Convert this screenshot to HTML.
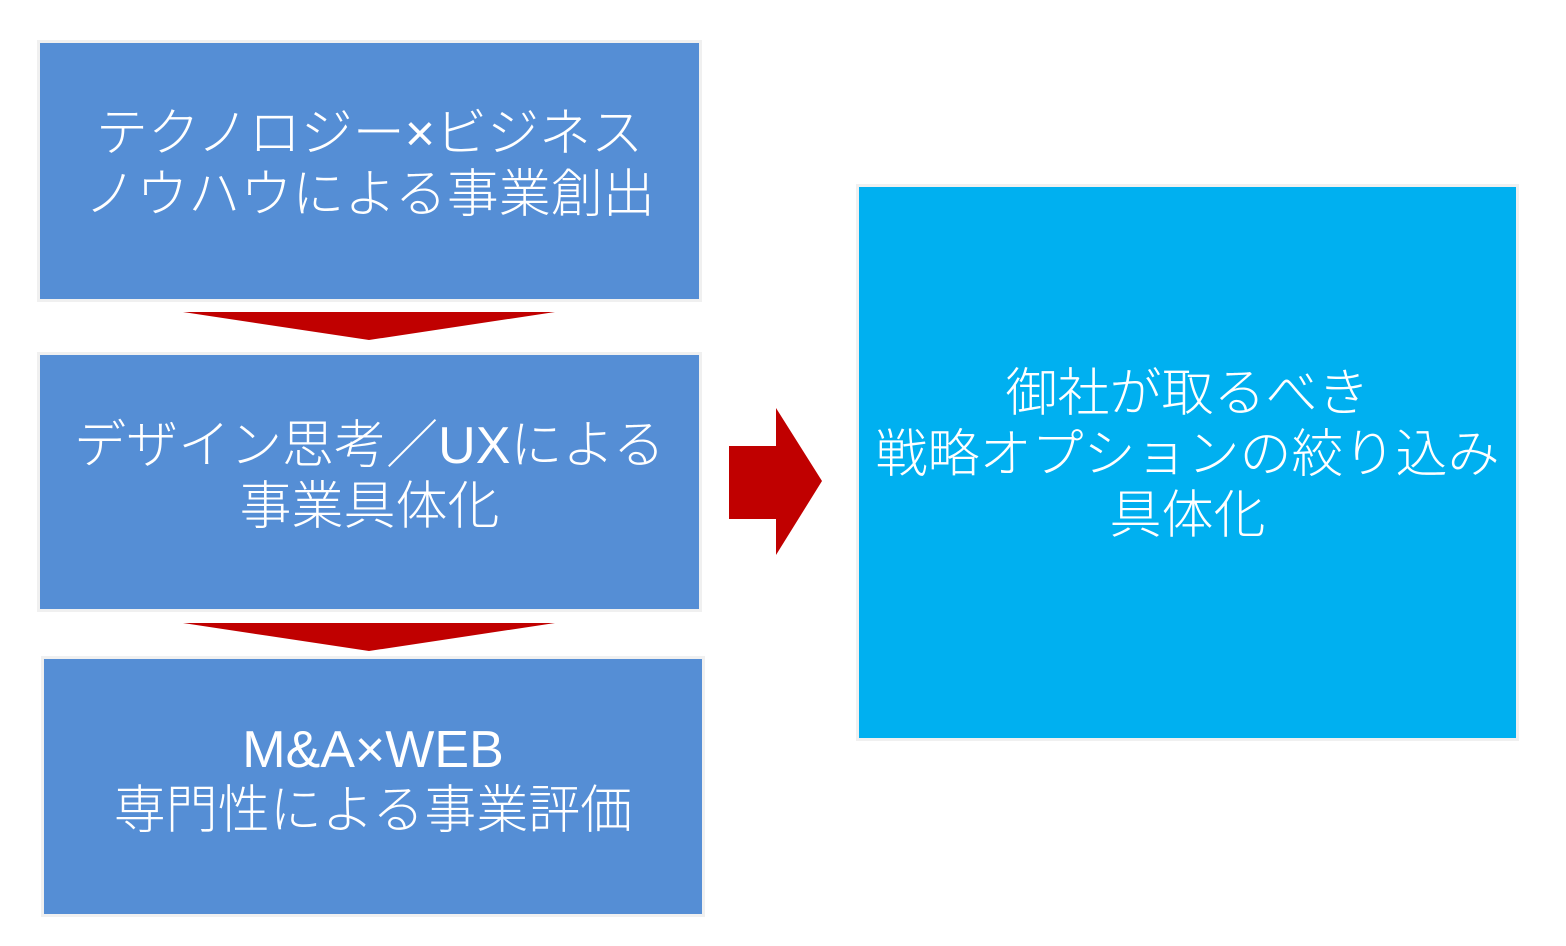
<!DOCTYPE html>
<html><head><meta charset="utf-8"><style>
body{margin:0;width:1566px;height:946px;background:#fff;position:relative;overflow:hidden;font-family:"Liberation Sans","Noto Sans CJK JP",sans-serif;}
.b{position:absolute;box-sizing:border-box;border:3px solid #f0f0f0;background:#558ed5;color:#fff;font-size:52px;line-height:61px;display:flex;flex-direction:column;align-items:center;justify-content:center;text-align:center;font-weight:300;white-space:nowrap}
.r{background:#00b0f0;}
svg{position:absolute;left:0;top:0}
</style></head><body>
<div class="b" style="left:37px;top:40px;width:665px;height:262px;padding-bottom:12px"><div>テクノロジー×ビジネス</div><div>ノウハウによる事業創出</div></div>
<div class="b" style="left:37px;top:352px;width:665px;height:260px;padding-bottom:10px"><div>デザイン思考／UXによる</div><div>事業具体化</div></div>
<div class="b" style="left:41px;top:656px;width:664px;height:261px;padding-bottom:12px"><div>M&amp;A×WEB</div><div>専門性による事業評価</div></div>
<div class="b r" style="left:856px;top:184px;width:663px;height:557px;padding-bottom:14px"><div>御社が取るべき</div><div>戦略オプションの絞り込み</div><div>具体化</div></div>
<svg width="1566" height="946">
<polygon points="183,312 555,312 369,340" fill="#c00000"/>
<polygon points="183,623 555,623 369,651" fill="#c00000"/>
<polygon points="729,446 776,446 776,408 822,481 776,555 776,519 729,519" fill="#c00000"/>
</svg>
</body></html>
